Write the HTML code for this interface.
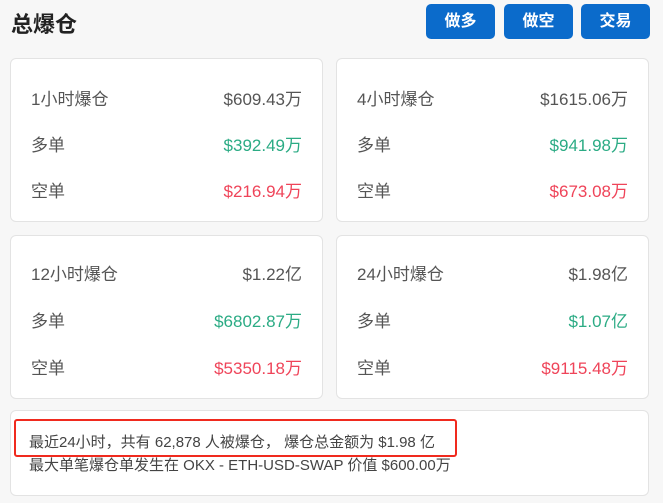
<!DOCTYPE html>
<html><head><meta charset="utf-8"><style>
*{margin:0;padding:0;box-sizing:border-box}
body{width:663px;height:503px;background:#f7f7f7;font-family:"Liberation Sans","Noto Sans CJK SC",sans-serif;position:relative;overflow:hidden;color:#555}
.title{position:absolute;left:11px;top:7px;font-size:22px;font-weight:bold;color:#222}
.btn{position:absolute;top:4px;height:35px;width:69px;background:#0b6bcb;color:#fff;border-radius:5px;font-size:16px;font-weight:bold;text-align:center;line-height:35px}
.card{position:absolute;background:#fff;border:1px solid #e3e3e3;border-radius:6px}
.row{position:absolute;left:20px;right:20px;font-size:17px;display:flex;justify-content:space-between;color:#555}
.g{color:#2bab84}.r{color:#ef4459}
.bt{position:absolute;left:29px;font-size:15px;color:#444}
</style></head><body>
<div class="title">总爆仓</div>
<div class="btn" style="left:426px">做多</div>
<div class="btn" style="left:504px">做空</div>
<div class="btn" style="left:581px">交易</div>

<div class="card" style="left:10px;top:58px;width:313px;height:164px">
<div class="row" style="top:26px"><span>1小时爆仓</span><span>$609.43万</span></div>
<div class="row" style="top:72px"><span>多单</span><span class="g">$392.49万</span></div>
<div class="row" style="top:118px"><span>空单</span><span class="r">$216.94万</span></div>
</div>
<div class="card" style="left:336px;top:58px;width:313px;height:164px">
<div class="row" style="top:26px"><span>4小时爆仓</span><span>$1615.06万</span></div>
<div class="row" style="top:72px"><span>多单</span><span class="g">$941.98万</span></div>
<div class="row" style="top:118px"><span>空单</span><span class="r">$673.08万</span></div>
</div>
<div class="card" style="left:10px;top:235px;width:313px;height:164px">
<div class="row" style="top:24px"><span>12小时爆仓</span><span>$1.22亿</span></div>
<div class="row" style="top:71px"><span>多单</span><span class="g">$6802.87万</span></div>
<div class="row" style="top:118px"><span>空单</span><span class="r">$5350.18万</span></div>
</div>
<div class="card" style="left:336px;top:235px;width:313px;height:164px">
<div class="row" style="top:24px"><span>24小时爆仓</span><span>$1.98亿</span></div>
<div class="row" style="top:71px"><span>多单</span><span class="g">$1.07亿</span></div>
<div class="row" style="top:118px"><span>空单</span><span class="r">$9115.48万</span></div>
</div>
<div class="card" style="left:10px;top:410px;width:639px;height:86px"></div>
<div style="position:absolute;left:14px;top:419px;width:443px;height:38px;border:2px solid #f02a1e;border-radius:3px"></div>
<div class="bt" style="top:431px">最近24小时，共有 62,878 人被爆仓， 爆仓总金额为 $1.98 亿</div>
<div class="bt" style="top:454px">最大单笔爆仓单发生在 OKX - ETH-USD-SWAP 价值 $600.00万</div>
</body></html>
